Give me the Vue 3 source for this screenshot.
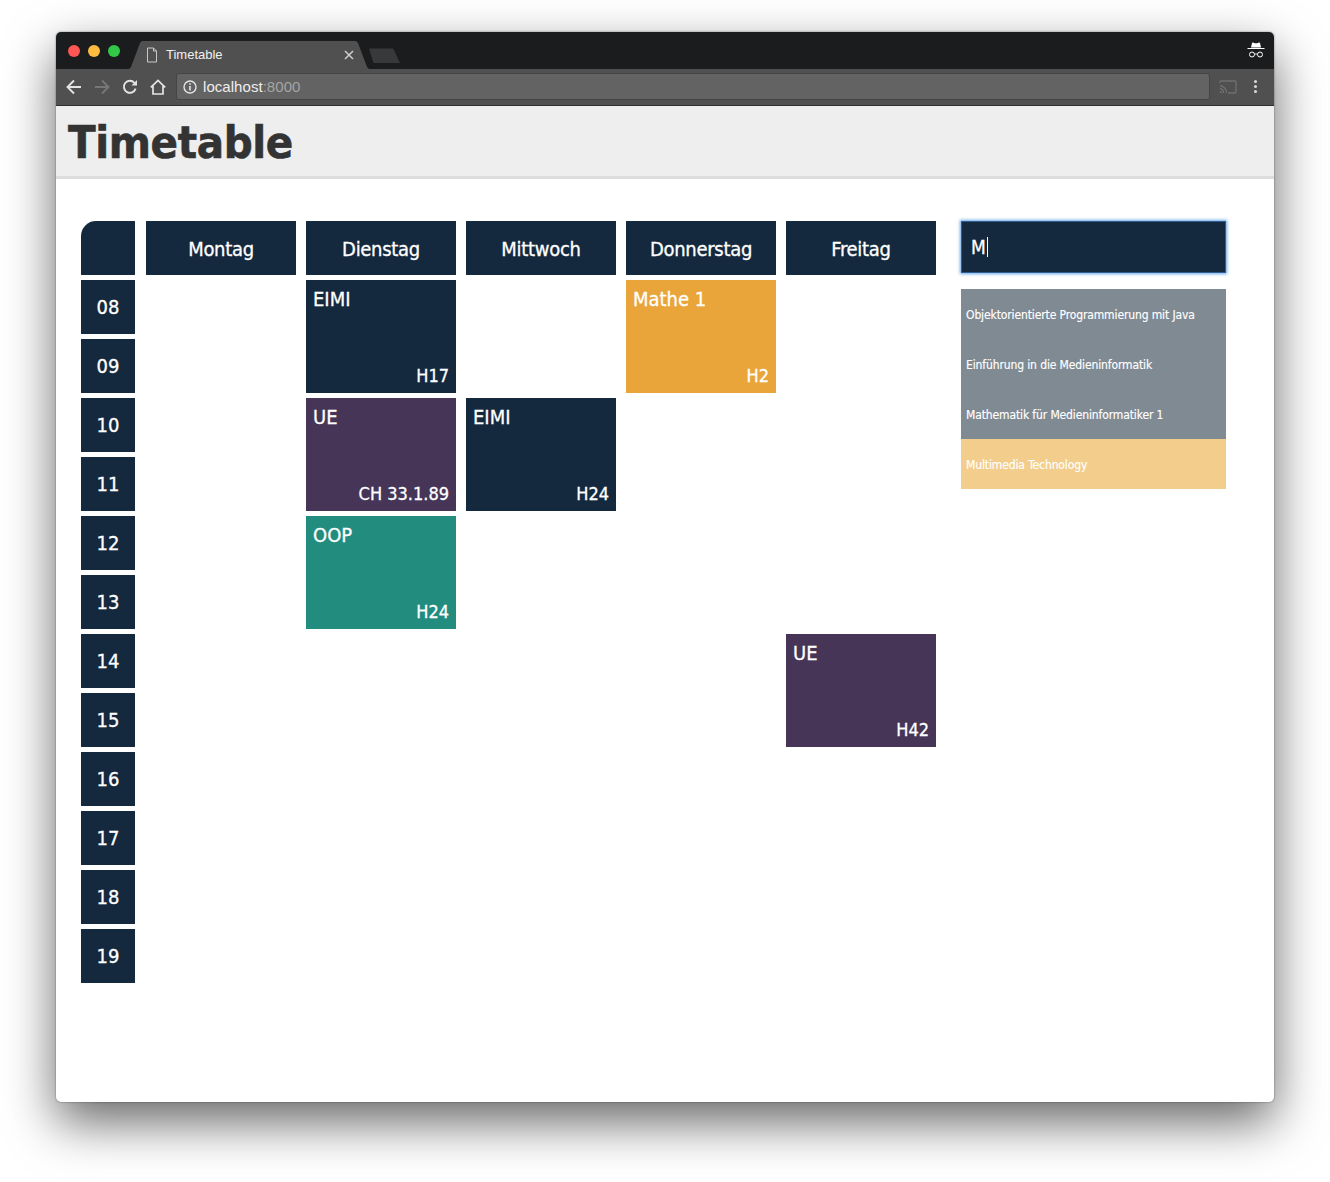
<template>
  <div class="stage">
    <div class="window">
      <div class="titlebar">
        <div class="lights">
          <span class="light red" />
          <span class="light yellow" />
          <span class="light green" />
        </div>
        <div class="tab">
          <svg class="tab-shape" width="242" height="28" viewBox="0 0 242 28">
            <path d="M0 28 Q2 28 3 26 L12 2 Q13 0 15 0 L227 0 Q229 0 230 2 L239 26 Q240 28 242 28 Z" fill="#505050" />
          </svg>
          <svg class="favicon" width="12" height="16" viewBox="0 0 12 16">
            <path d="M1.5 1 H7.5 L10.5 4 V15 H1.5 Z M7.5 1 V4 H10.5" fill="none" stroke="#c8c8c8" stroke-width="1" />
          </svg>
          <span class="tab-title">Timetable</span>
          <svg class="tab-close" width="10" height="10" viewBox="0 0 10 10">
            <path d="M1 1 L9 9 M9 1 L1 9" stroke="#d0d0d0" stroke-width="1.5" />
          </svg>
        </div>
        <svg class="new-tab" width="33" height="15" viewBox="0 0 33 15">
          <path d="M1 0.5 H24 C25 0.5 25.5 1 26 2 L32 15 H7 C6 15 5.5 14.5 5 13.5 Z" fill="#38393b" />
        </svg>
        <svg class="incognito" width="18" height="16" viewBox="0 0 18 16">
          <path d="M5 1 Q5.2 0.4 6 0.6 L8 1.2 H10 L12 0.6 Q12.8 0.4 13 1 L14 5.5 H4 Z" fill="#fff" />
          <path d="M0.5 6.5 H17.5" stroke="#fff" stroke-width="1.2" />
          <circle cx="5" cy="12.5" r="2.5" fill="none" stroke="#fff" stroke-width="1" />
          <circle cx="13" cy="12.5" r="2.5" fill="none" stroke="#fff" stroke-width="1" />
          <path d="M7.5 12 H10.5" stroke="#fff" stroke-width="0.9" />
        </svg>
      </div>
      <div class="toolbar">
        <svg class="tool" width="16" height="16" viewBox="0 0 16 16">
          <path d="M15 8 H2 M8 1.5 L1.5 8 L8 14.5" fill="none" stroke="#e4e4e4" stroke-width="1.9" />
        </svg>
        <svg class="tool" width="16" height="16" viewBox="0 0 16 16">
          <path d="M1 8 H14 M8 1.5 L14.5 8 L8 14.5" fill="none" stroke="#777" stroke-width="1.9" />
        </svg>
        <svg class="tool" width="16" height="16" viewBox="0 0 16 16">
          <path d="M13.6 9.6 A6 6 0 1 1 12.4 3.8" fill="none" stroke="#e4e4e4" stroke-width="1.9" />
          <path d="M9.5 6.4 H15 V0.9 Z" fill="#e4e4e4" />
        </svg>
        <svg class="tool" width="16" height="16" viewBox="0 0 16 16">
          <path d="M0.8 8.4 L8 1.4 L15.2 8.4 M3 7 V15 H13 V7" fill="none" stroke="#e4e4e4" stroke-width="1.7" />
        </svg>
        <div class="urlbar">
          <svg width="14" height="14" viewBox="0 0 14 14">
            <circle cx="7" cy="7" r="6" fill="none" stroke="#e4e4e4" stroke-width="1.4" />
            <path d="M7 6 V10.6 M7 3.2 V4.8" stroke="#e4e4e4" stroke-width="1.6" />
          </svg>
          <span class="host">localhost<span class="port">:8000</span></span>
        </div>
        <svg class="cast" width="18" height="14" viewBox="0 0 18 14">
          <path d="M1 3 V2 Q1 1 2 1 H16 Q17 1 17 2 V12 Q17 13 16 13 H9" fill="none" stroke="#707070" stroke-width="1.3" />
          <path d="M1 5.5 A7.5 7.5 0 0 1 7.5 13 M1 8.5 A4.5 4.5 0 0 1 4.5 13" fill="none" stroke="#707070" stroke-width="1.3" />
          <path d="M1 11 A2 2 0 0 1 3 13 H1 Z" fill="#707070" />
        </svg>
        <div class="dots"><i /><i /><i /></div>
      </div>
      <header class="page-head">
        <h1>Timetable</h1>
      </header>
      <main class="content">
        <div class="timetable">
          <div class="cell corner" />
          <div v-for="d in days" :key="d" class="cell day">{{ d }}</div>
          <div
            v-for="(h, i) in hours"
            :key="h"
            class="cell hour"
            :style="{ gridRow: i + 2 }"
          >{{ h }}</div>
          <div
            v-for="e in events"
            :key="e.col + '-' + e.row"
            class="event"
            :style="{ gridColumn: e.col + 1, gridRow: e.row + 2 + ' / span 2', background: colors[e.kind] }"
          >
            <span class="ev-name">{{ e.name }}</span>
            <span class="ev-room">{{ e.room }}</span>
          </div>
        </div>
        <aside class="side">
          <div class="search">M<span class="caret" /></div>
          <ul class="results">
            <li v-for="r in results" :key="r.label" :class="{ added: r.added }">{{ r.label }}</li>
          </ul>
        </aside>
      </main>
    </div>
  </div>
</template>

<script setup>
const days = ["Montag", "Dienstag", "Mittwoch", "Donnerstag", "Freitag"];
const hours = ["08", "09", "10", "11", "12", "13", "14", "15", "16", "17", "18", "19"];
const colors = {
  navy: "#15293e",
  purple: "#463557",
  teal: "#228c7e",
  orange: "#e9a53a",
};
const events = [
  { col: 2, row: 0, name: "EIMI", room: "H17", kind: "navy" },
  { col: 4, row: 0, name: "Mathe 1", room: "H2", kind: "orange" },
  { col: 2, row: 2, name: "UE", room: "CH 33.1.89", kind: "purple" },
  { col: 3, row: 2, name: "EIMI", room: "H24", kind: "navy" },
  { col: 2, row: 4, name: "OOP", room: "H24", kind: "teal" },
  { col: 5, row: 6, name: "UE", room: "H42", kind: "purple" },
];
const results = [
  { label: "Objektorientierte Programmierung mit Java" },
  { label: "Einführung in die Medieninformatik" },
  { label: "Mathematik für Medieninformatiker 1" },
  { label: "Multimedia Technology", added: true },
];
</script>

<style>
html,
body {
  margin: 0;
  background: #fff;
}
</style>

<style scoped>
.stage {
  box-sizing: border-box;
  width: 1330px;
  height: 1182px;
  padding: 32px 56px 0;
  overflow: hidden;
  background: #fff;
}

.window {
  display: flex;
  flex-direction: column;
  height: 1070px;
  border-radius: 5px;
  overflow: hidden;
  background: #fff;
  box-shadow: 0 20px 50px rgba(0, 0, 0, 0.6), 0 0 2px rgba(0, 0, 0, 0.5);
  clip-path: inset(-100px round 5px);
}

.titlebar {
  display: flex;
  align-items: flex-end;
  height: 37px;
  background: #1b1c1e;
  position: relative;
}

.lights {
  display: flex;
  gap: 8px;
  align-self: flex-start;
  margin: 13px 0 0 12px;
}

.light {
  width: 12px;
  height: 12px;
  border-radius: 50%;
}
.red { background: #fc5753; }
.yellow { background: #fdbc40; }
.green { background: #33c748; }

.tab {
  position: relative;
  display: flex;
  align-items: center;
  width: 242px;
  height: 28px;
  margin-left: 8px;
  font: 13px "Liberation Sans", sans-serif;
  color: #f0f0f0;
}

.tab-shape {
  position: absolute;
  left: 0;
  top: 0;
}

.favicon {
  position: relative;
  margin-left: 18px;
}

.tab-title {
  position: relative;
  margin-left: 8px;
  margin-bottom: 2px;
}

.tab-close {
  position: relative;
  margin-left: auto;
  margin-right: 16px;
}

.new-tab {
  margin: 0 0 6px -2px;
}

.incognito {
  position: absolute;
  right: 9px;
  top: 10px;
}

.toolbar {
  display: flex;
  align-items: center;
  box-sizing: border-box;
  height: 37px;
  padding: 0 12px 1px 10px;
  background: #505050;
  border-bottom: 1px solid #2f2f2f;
}

.tool {
  margin-right: 12px;
  flex: none;
}

.urlbar {
  display: flex;
  align-items: center;
  gap: 6px;
  box-sizing: border-box;
  width: 1034px;
  height: 27px;
  margin-left: -2px;
  padding-left: 6px;
  background: #636363;
  border: 1px solid #454545;
  border-radius: 3px;
}

.host {
  font: 15px "Liberation Sans", sans-serif;
  letter-spacing: 0.05px;
  color: #eee;
}

.port {
  color: #a5a5a5;
}

.cast {
  margin-left: 9px;
}

.dots {
  display: flex;
  flex-direction: column;
  gap: 2px;
  margin-left: 17px;
}

.dots i {
  width: 3px;
  height: 3px;
  border-radius: 50%;
  background: #d8d8d8;
}

.page-head {
  box-sizing: border-box;
  height: 73px;
  padding-left: 12px;
  background: #eee;
  border-bottom: 3px solid #ddd;
}

h1 {
  margin: 0;
  font: bold 45px/74px "DejaVu Sans", sans-serif;
  font-stretch: condensed;
  letter-spacing: -0.35px;
  color: #333;
  -webkit-text-stroke: 0.6px #333;
}

.content {
  display: flex;
  padding: 42px 0 0 25px;
  font-family: "DejaVu Sans", sans-serif;
  font-stretch: condensed;
  color: #fff;
  -webkit-text-stroke: 0.3px #fff;
}

.timetable {
  display: grid;
  grid-template-columns: 55px repeat(5, 150px);
  grid-auto-rows: 54px;
  column-gap: 10px;
  row-gap: 5px;
  align-self: flex-start;
}

.cell {
  display: flex;
  align-items: center;
  justify-content: center;
  background: #15293e;
  font-size: 20px;
}

.day {
  padding-top: 2px;
  box-sizing: border-box;
  letter-spacing: -0.3px;
}

.corner {
  width: 54px;
  border-top-left-radius: 15px;
}

.hour {
  grid-column: 1;
  width: 54px;
}

.event {
  display: flex;
  flex-direction: column;
  justify-content: space-between;
  padding: 7px;
  font-size: 20px;
  line-height: 24px;
}

.ev-room {
  align-self: flex-end;
  font-size: 18px;
  line-height: 20px;
}

.side {
  width: 265px;
  margin-left: 25px;
}

.search {
  display: flex;
  align-items: center;
  box-sizing: border-box;
  height: 52px;
  padding-left: 9px;
  background: #15293e;
  border: 1px solid #2c5e93;
  box-shadow: 0 0 3px 1px #6aa5e8;
  font-size: 19px;
}

.caret {
  width: 1px;
  height: 20px;
  background: #fff;
  margin-left: 1px;
}

.results {
  margin: 16px 0 0;
  padding: 0;
  list-style: none;
}

.results li {
  box-sizing: border-box;
  height: 50px;
  padding-left: 5px;
  background: #7f8a93;
  font-size: 12px;
  letter-spacing: -0.12px;
  line-height: 52px;
  white-space: nowrap;
  -webkit-text-stroke: 0.15px #fff;
}

.results li.added {
  background: #f3cd8c;
}
</style>
